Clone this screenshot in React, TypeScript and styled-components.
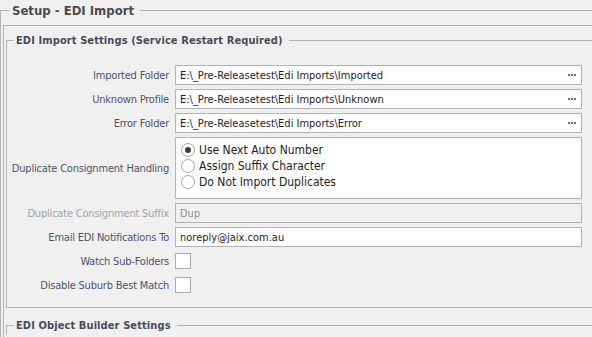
import React from "react";
import styled, { createGlobalStyle } from "styled-components";

const FONT = `"DejaVu Sans Condensed", "DejaVu Sans", sans-serif`;
const LINE = "#b4b4b4";

const GlobalStyle = createGlobalStyle`
  html, body {
    margin: 0;
    padding: 0;
    background: #f0f0f0;
    overflow: hidden;
  }
  body {
    font-family: ${FONT};
    font-stretch: condensed;
  }
`;

const Screen = styled.div`
  width: 592px;
  height: 337px;
  overflow: hidden;
  background: #f0f0f0;
`;

const GroupHead = styled.div<{ height: number }>`
  display: flex;
  align-items: center;
  height: ${(props) => props.height}px;
  width: 640px;
`;

const Tick = styled.div<{ width: number }>`
  align-self: flex-end;
  width: ${(props) => props.width}px;
  height: 50%;
  border-top: 1px solid ${LINE};
  border-left: 1px solid ${LINE};
  box-sizing: border-box;
`;

const Title = styled.span<{ big?: boolean }>`
  font-family: ${FONT};
  font-weight: bold;
  font-size: ${(props) => (props.big ? "13px" : "11px")};
  color: ${(props) => (props.big ? "#4b4b4b" : "#474c58")};
  letter-spacing: ${(props) => (props.big ? "0" : "0.1px")};
  padding: 0 6px 0 2px;
  white-space: nowrap;
`;

const Rule = styled.div`
  flex: 1;
  height: 1px;
  background: ${LINE};
`;

const OuterBody = styled.div`
  border-left: 1px solid ${LINE};
  padding: 5px 0 0 2px;
`;

const Panel = styled.div`
  border-top: 1px solid ${LINE};
  border-left: 1px solid ${LINE};
  padding: 4px 0 0 2px;
  height: 400px;
`;

const GroupBody = styled.div`
  border-left: 1px solid ${LINE};
  border-bottom: 1px solid ${LINE};
  padding: 15px 0 12px 0;
  width: 640px;
`;

const Form = styled.div`
  display: grid;
  grid-template-columns: 162px 1fr;
  column-gap: 6px;
  row-gap: 4px;
  width: 575px;
`;

const Label = styled.div<{ disabled?: boolean }>`
  font-family: ${FONT};
  font-size: 11px;
  letter-spacing: -0.2px;
  color: ${(props) => (props.disabled ? "#a3a3a3" : "#4e5468")};
  text-align: right;
  white-space: nowrap;
  align-self: center;
`;

const Field = styled.div<{ disabled?: boolean }>`
  display: flex;
  align-items: center;
  height: 20px;
  box-sizing: border-box;
  border: 1px solid ${LINE};
  background: ${(props) => (props.disabled ? "#f0f0f0" : "#ffffff")};
  padding: 0 5px 0 4px;
  font-family: ${FONT};
  font-size: 11px;
  color: ${(props) => (props.disabled ? "#8e8e8e" : "#1e1e1e")};
  white-space: nowrap;
`;

const FieldText = styled.span`
  flex: 1;
`;

const Ellipsis = styled.svg`
  width: 8px;
  height: 2px;
  fill: #6b6b6b;
`;

const RadioBox = styled.div`
  border: 1px solid ${LINE};
  background: #ffffff;
  padding: 4px 5px 8px;
  display: flex;
  flex-direction: column;
`;

const RadioItem = styled.div`
  display: flex;
  align-items: center;
  height: 16px;
  gap: 4px;
  font-family: ${FONT};
  font-size: 12px;
  color: #1e1e1e;
`;

const RadioCircle = styled.span<{ checked?: boolean }>`
  width: 14px;
  height: 14px;
  box-sizing: border-box;
  border: 1px solid #a8a8a8;
  border-radius: 50%;
  background: #fff;
  display: flex;
  align-items: center;
  justify-content: center;
  &::after {
    content: "";
    width: 6px;
    height: 6px;
    border-radius: 50%;
    background: ${(props) => (props.checked ? "#3c3c3c" : "transparent")};
  }
`;

const CheckCell = styled.div`
  height: 20px;
  display: flex;
  align-items: center;
`;

const Check = styled.span`
  width: 16px;
  height: 16px;
  box-sizing: border-box;
  border: 1px solid #acacac;
  background: #fff;
`;

const NextGroup = styled.div`
  margin-top: 7px;
`;

const folders = [
  { label: "Imported Folder", value: "E:\\_Pre-Releasetest\\Edi Imports\\Imported" },
  { label: "Unknown Profile", value: "E:\\_Pre-Releasetest\\Edi Imports\\Unknown" },
  { label: "Error Folder", value: "E:\\_Pre-Releasetest\\Edi Imports\\Error" },
];

const radios = ["Use Next Auto Number", "Assign Suffix Character", "Do Not Import Duplicates"];

const App = () => {
  return (
    <Screen>
      <GlobalStyle />
      <GroupHead height={20}>
        <Tick width={10} />
        <Title big>Setup - EDI Import</Title>
        <Rule />
      </GroupHead>
      <OuterBody>
        <Panel>
          <GroupHead height={20}>
            <Tick width={8} />
            <Title>EDI Import Settings (Service Restart Required)</Title>
            <Rule />
          </GroupHead>
          <GroupBody>
            <Form>
              {folders.map((f) => (
                <React.Fragment key={f.label}>
                  <Label>{f.label}</Label>
                  <Field>
                    <FieldText>{f.value}</FieldText>
                    <Ellipsis viewBox="0 0 8 2">
                      <rect x="0" y="0" width="2" height="2" />
                      <rect x="3" y="0" width="2" height="2" />
                      <rect x="6" y="0" width="2" height="2" />
                    </Ellipsis>
                  </Field>
                </React.Fragment>
              ))}
              <Label>Duplicate Consignment Handling</Label>
              <RadioBox>
                {radios.map((r, i) => (
                  <RadioItem key={r}>
                    <RadioCircle checked={i === 0} />
                    {r}
                  </RadioItem>
                ))}
              </RadioBox>
              <Label disabled>Duplicate Consignment Suffix</Label>
              <Field disabled>Dup</Field>
              <Label>Email EDI Notifications To</Label>
              <Field>noreply@jaix.com.au</Field>
              <Label>Watch Sub-Folders</Label>
              <CheckCell>
                <Check />
              </CheckCell>
              <Label>Disable Suburb Best Match</Label>
              <CheckCell>
                <Check />
              </CheckCell>
            </Form>
          </GroupBody>
          <NextGroup>
            <GroupHead height={20}>
              <Tick width={8} />
              <Title>EDI Object Builder Settings</Title>
              <Rule />
            </GroupHead>
          </NextGroup>
        </Panel>
      </OuterBody>
    </Screen>
  );
};

export default App;
